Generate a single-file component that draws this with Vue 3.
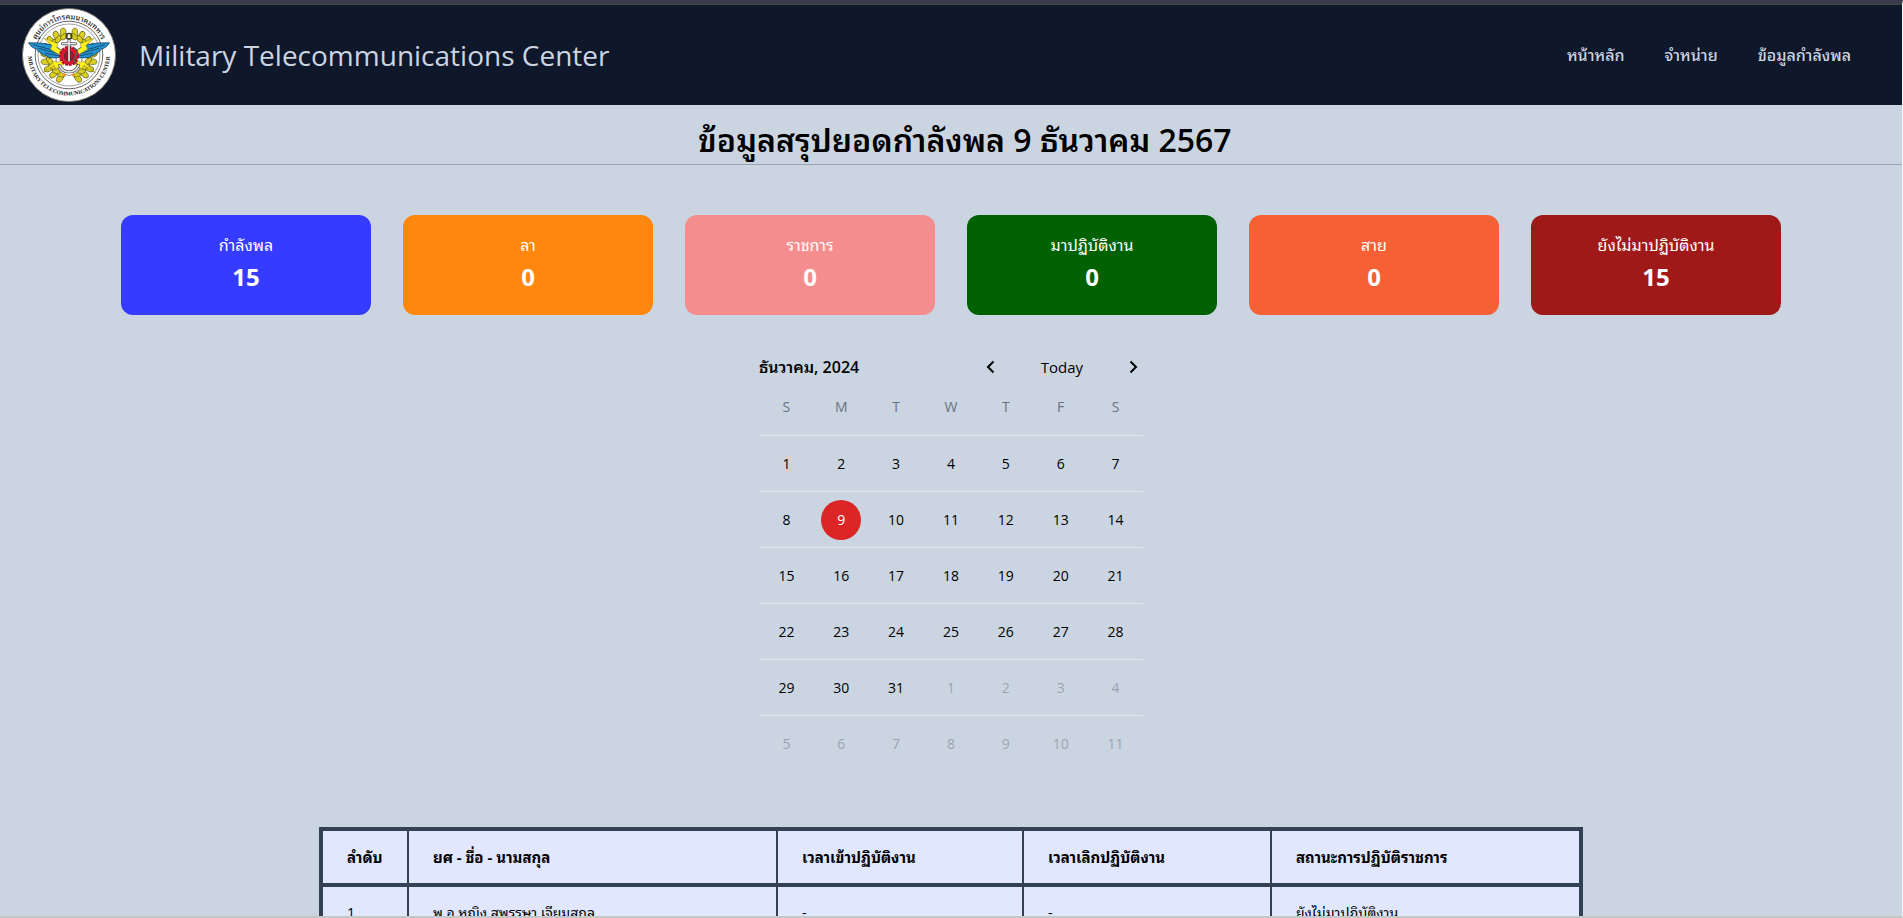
<script setup>
import { ref } from 'vue'

const links = ['หน้าหลัก', 'จำหน่าย', 'ข้อมูลกำลังพล']

const cards = [
  { label: 'กำลังพล', value: 15, tone: 'blue' },
  { label: 'ลา', value: 0, tone: 'orange' },
  { label: 'ราชการ', value: 0, tone: 'pink' },
  { label: 'มาปฏิบัติงาน', value: 0, tone: 'green' },
  { label: 'สาย', value: 0, tone: 'coral' },
  { label: 'ยังไม่มาปฏิบัติงาน', value: 15, tone: 'red' },
]

const weekdays = ['S', 'M', 'T', 'W', 'T', 'F', 'S']
const selected = ref(9)
const weeks = Array.from({ length: 6 }, (_, w) =>
  Array.from({ length: 7 }, (_, d) => {
    const n = w * 7 + d + 1
    return n > 31 ? { day: n - 31, outside: true } : { day: n, outside: false }
  })
)

const columns = ['ลำดับ', 'ยศ - ชื่อ - นามสกุล', 'เวลาเข้าปฏิบัติงาน', 'เวลาเลิกปฏิบัติงาน', 'สถานะการปฏิบัติราชการ']
const people = [['1', 'พ.อ.หญิง สุพรรษา เจียมสกุล', '-', '-', 'ยังไม่มาปฏิบัติงาน']]

const leafAngles = [-158, -140, -122, -104, -86, -68, -50, -32, -14]
</script>

<template>
  <div class="page">
    <header class="topbar">
      <svg class="logo" viewBox="0 0 100 100" role="img" aria-label="Military Telecommunications Center">
        <defs>
          <path id="arc-top" d="M12 50 A38 38 0 0 1 88 50" />
          <path id="arc-bottom" d="M7 43 A43.500 43.500 0 1 0 93 43" />
          <g id="leaf">
            <ellipse cx="0" cy="-29" rx="3.400" ry="5.600" transform="rotate(12 0 -29)" />
            <ellipse cx="0" cy="-24" rx="3" ry="5" transform="rotate(70 0 -24)" />
          </g>
          <g id="wing">
            <path d="M44 47 Q34 36 7 37 Q10 43 17 44 Q15 46 21 48 Q20 50 27 51 Q27 53 33 53 Q38 54 44 51Z" />
            <path d="M12 39 L40 47 M18 43 L40 49 M24 48 L40 51" fill="none" />
          </g>
        </defs>
        <circle cx="50" cy="50" r="49.500" fill="#fff" stroke="#77736a" />
        <circle cx="50" cy="50" r="36" fill="#fff" stroke="#333" stroke-width=".8" />
        <circle cx="50" cy="50" r="33" fill="none" stroke="#555" stroke-width=".6" />
        <g class="leaves">
          <use v-for="a in leafAngles" :key="'l' + a" href="#leaf" :transform="`translate(50 51) rotate(${a}) scale(.88)`" />
          <use v-for="a in leafAngles" :key="'r' + a" href="#leaf" :transform="`translate(50 51) scale(-1 1) rotate(${a}) scale(.88)`" />
        </g>
        <path d="M36 48 Q35 70 50 72 Q65 70 64 48Z" fill="#fff" stroke="#555" stroke-width=".7" />
        <g fill="#2593d1" stroke="#123a58" stroke-width=".8">
          <use href="#wing" />
          <use href="#wing" transform="translate(100 0) scale(-1 1)" />
        </g>
        <g fill="#fff21a" stroke="#77701a" stroke-width=".5">
          <path d="M23 32 L38 38 L37 42 L46 48 L42 51 L30 44 L32 40Z" />
          <path d="M77 32 L62 38 L63 42 L54 48 L58 51 L70 44 L68 40Z" />
          <path d="M22 69 L35 56 L38 58 L46 53 L44 60 L36 65 L34 61Z" />
          <path d="M78 69 L65 56 L62 58 L54 53 L56 60 L64 65 L66 61Z" />
        </g>
        <circle cx="50" cy="51" r="9.500" fill="#df1830" stroke="#b3122a" stroke-width="2.500" stroke-dasharray="3 1" />
        <circle cx="50" cy="51" r="5" fill="#b3122a" stroke="#333" />
        <g fill="none" stroke-linecap="round">
          <path d="M50 34 V56 M43 38 H57 M40 61 Q43 68 50 68 Q57 68 60 61" stroke="#333" stroke-width="3" />
          <path d="M50 34 V56 M43 38 H57 M40 61 Q43 68 50 68 Q57 68 60 61" stroke="#e8e8e8" stroke-width="1.800" />
          <circle cx="50" cy="30" r="3" stroke="#333" stroke-width="1.500" />
          <path d="M56 43 Q61 46 57 51 T59 60" stroke="#555" stroke-width="1.500" stroke-dasharray="2 1" />
        </g>
        <g fill="#f09a24">
          <circle cx="45" cy="71" r="1.500" />
          <circle cx="55" cy="71" r="1.500" />
        </g>
        <text class="seal-th"><textPath href="#arc-top" startOffset="50%" text-anchor="middle">ศูนย์การโทรคมนาคมทหาร</textPath></text>
        <text class="seal-en"><textPath href="#arc-bottom" startOffset="50%" text-anchor="middle">MILITARY TELECOMMUNICATIONS CENTER</textPath></text>
      </svg>
      <span class="brand">Military Telecommunications Center</span>
      <nav class="nav">
        <a v-for="l in links" :key="l" href="#">{{ l }}</a>
      </nav>
    </header>

    <h1 class="heading">ข้อมูลสรุปยอดกำลังพล 9 ธันวาคม 2567</h1>

    <section class="cards">
      <article v-for="c in cards" :key="c.label" class="card" :class="c.tone">
        <span class="card-label">{{ c.label }}</span>
        <strong class="card-value">{{ c.value }}</strong>
      </article>
    </section>

    <section class="calendar">
      <div class="cal-head">
        <h2>ธันวาคม, 2024</h2>
        <div class="cal-nav">
          <button type="button" aria-label="Previous month">
            <svg viewBox="0 0 20 20"><path d="M12.500 4.500 L7 10 L12.500 15.500" /></svg>
          </button>
          <button type="button" class="today" @click="selected = 9">Today</button>
          <button type="button" aria-label="Next month">
            <svg viewBox="0 0 20 20"><path d="M7.500 4.500 L13 10 L7.500 15.500" /></svg>
          </button>
        </div>
      </div>
      <div class="week names">
        <span v-for="(d, i) in weekdays" :key="i">{{ d }}</span>
      </div>
      <div v-for="(week, i) in weeks" :key="i" class="week days">
        <button
          v-for="d in week"
          :key="d.day"
          type="button"
          class="day"
          :class="{ outside: d.outside, selected: !d.outside && d.day === selected }"
          @click="selected = d.outside ? selected : d.day"
        >{{ d.day }}</button>
      </div>
    </section>

    <table class="roster">
      <colgroup>
        <col class="c-no"><col class="c-name"><col class="c-in"><col class="c-out"><col>
      </colgroup>
      <thead>
        <tr><th v-for="c in columns" :key="c" scope="col">{{ c }}</th></tr>
      </thead>
      <tbody>
        <tr v-for="p in people" :key="p[0]"><td v-for="(v, i) in p" :key="i">{{ v }}</td></tr>
      </tbody>
    </table>
  </div>
</template>

<style>
body {
  background: #cbd5e1;
}
</style>

<style scoped>
* {
  box-sizing: border-box;
}
.page {
  height: 100vh;
  overflow: hidden;
  background: #cbd5e1;
  border-top: 4px solid #3b3b4f;
  border-right: 1px solid #f1f3f5;
  border-bottom: 2px solid #c4c8c4;
  color: #000;
  font-family: 'Segoe UI', 'Open Sans', 'Leelawadee UI', 'Noto Sans Thai Looped', 'Loma', 'Waree', 'Noto Sans Thai', sans-serif;
  font-size: 16px;
  line-height: 24px;
}
button {
  border: 0;
  padding: 0;
  background: none;
  font: inherit;
  color: inherit;
  cursor: pointer;
}
.topbar {
  display: flex;
  align-items: center;
  height: 101px;
  padding: 0 51px 0 22px;
  background: #0f172a;
  border-top: 1px solid #474547;
  color: #cbd5e1;
}
.logo {
  width: 94px;
  height: 94px;
  margin-right: 23px;
}
.leaves {
  fill: #d9cf22;
  stroke: #4d4a10;
  stroke-width: 0.7;
}
.seal-th {
  font-size: 8px;
  font-weight: 500;
  fill: #222;
}
.seal-en {
  font-family: 'Liberation Serif', serif;
  font-size: 6px;
  font-weight: 700;
  fill: #222;
}
.brand {
  font-size: 28px;
  line-height: 36px;
}
.nav {
  display: flex;
  gap: 40px;
  margin-left: auto;
}
.nav a {
  color: inherit;
  font-weight: 500;
  text-decoration: none;
}
.heading {
  margin: 0;
  padding: 17px 0 6px 28px;
  border-bottom: 1px solid #9ca3af;
  font-size: 32px;
  font-weight: 600;
  line-height: 36px;
  text-align: center;
}
.cards {
  display: grid;
  grid-template-columns: repeat(6, 1fr);
  gap: 32px;
  max-width: 1660px;
  margin: 50px auto 40px;
}
.card {
  display: flex;
  flex-direction: column;
  align-items: center;
  justify-content: center;
  height: 100px;
  border-radius: 12px;
  color: #fff;
}
.card-value {
  font-size: 24px;
  font-weight: 700;
  line-height: 40px;
}
.blue { background: #353bff; }
.orange { background: #ff870e; }
.pink { background: #f48e8e; }
.green { background: #006100; }
.coral { background: #f66035; }
.red { background: #9f1919; }
.calendar {
  width: 384px;
  margin: 0 auto;
}
.cal-head {
  display: flex;
  align-items: center;
  justify-content: space-between;
}
.cal-head h2 {
  margin: 0;
  font-size: 16px;
  font-weight: 600;
}
.cal-nav {
  display: flex;
  align-items: center;
  gap: 40px;
}
.today {
  font-size: 15px;
}
.cal-nav svg {
  display: block;
  width: 20px;
  height: 20px;
  fill: none;
  stroke: #000;
  stroke-width: 2;
}
.week {
  display: grid;
  grid-template-columns: repeat(7, 1fr);
  place-items: center;
  height: 56px;
  font-size: 14px;
  line-height: 20px;
}
.names {
  color: #6b7280;
}
.days {
  border-top: 1px solid #e5e7eb;
}
.day {
  width: 40px;
  height: 40px;
  border-radius: 50%;
}
.outside {
  color: #9ca3af;
}
.selected {
  background: #dc2626;
  color: #fff;
}
.roster {
  width: 90%;
  max-width: 1264px;
  margin: 56px auto 0;
  table-layout: fixed;
  border: 4px solid #334155;
  border-spacing: 0;
  background: #e0e7ff;
  font-size: 14px;
  line-height: 20px;
  text-align: left;
}
.c-no { width: 86px; }
.c-name { width: 369px; }
.c-in { width: 246px; }
.c-out { width: 248px; }
.roster th,
.roster td {
  padding: 16px 24px;
  border-right: 2px solid #334155;
}
.roster th {
  border-bottom: 4px solid #334155;
  font-size: 15px;
  font-weight: 700;
}
.roster th:last-child,
.roster td:last-child {
  border-right: 0;
}
</style>
